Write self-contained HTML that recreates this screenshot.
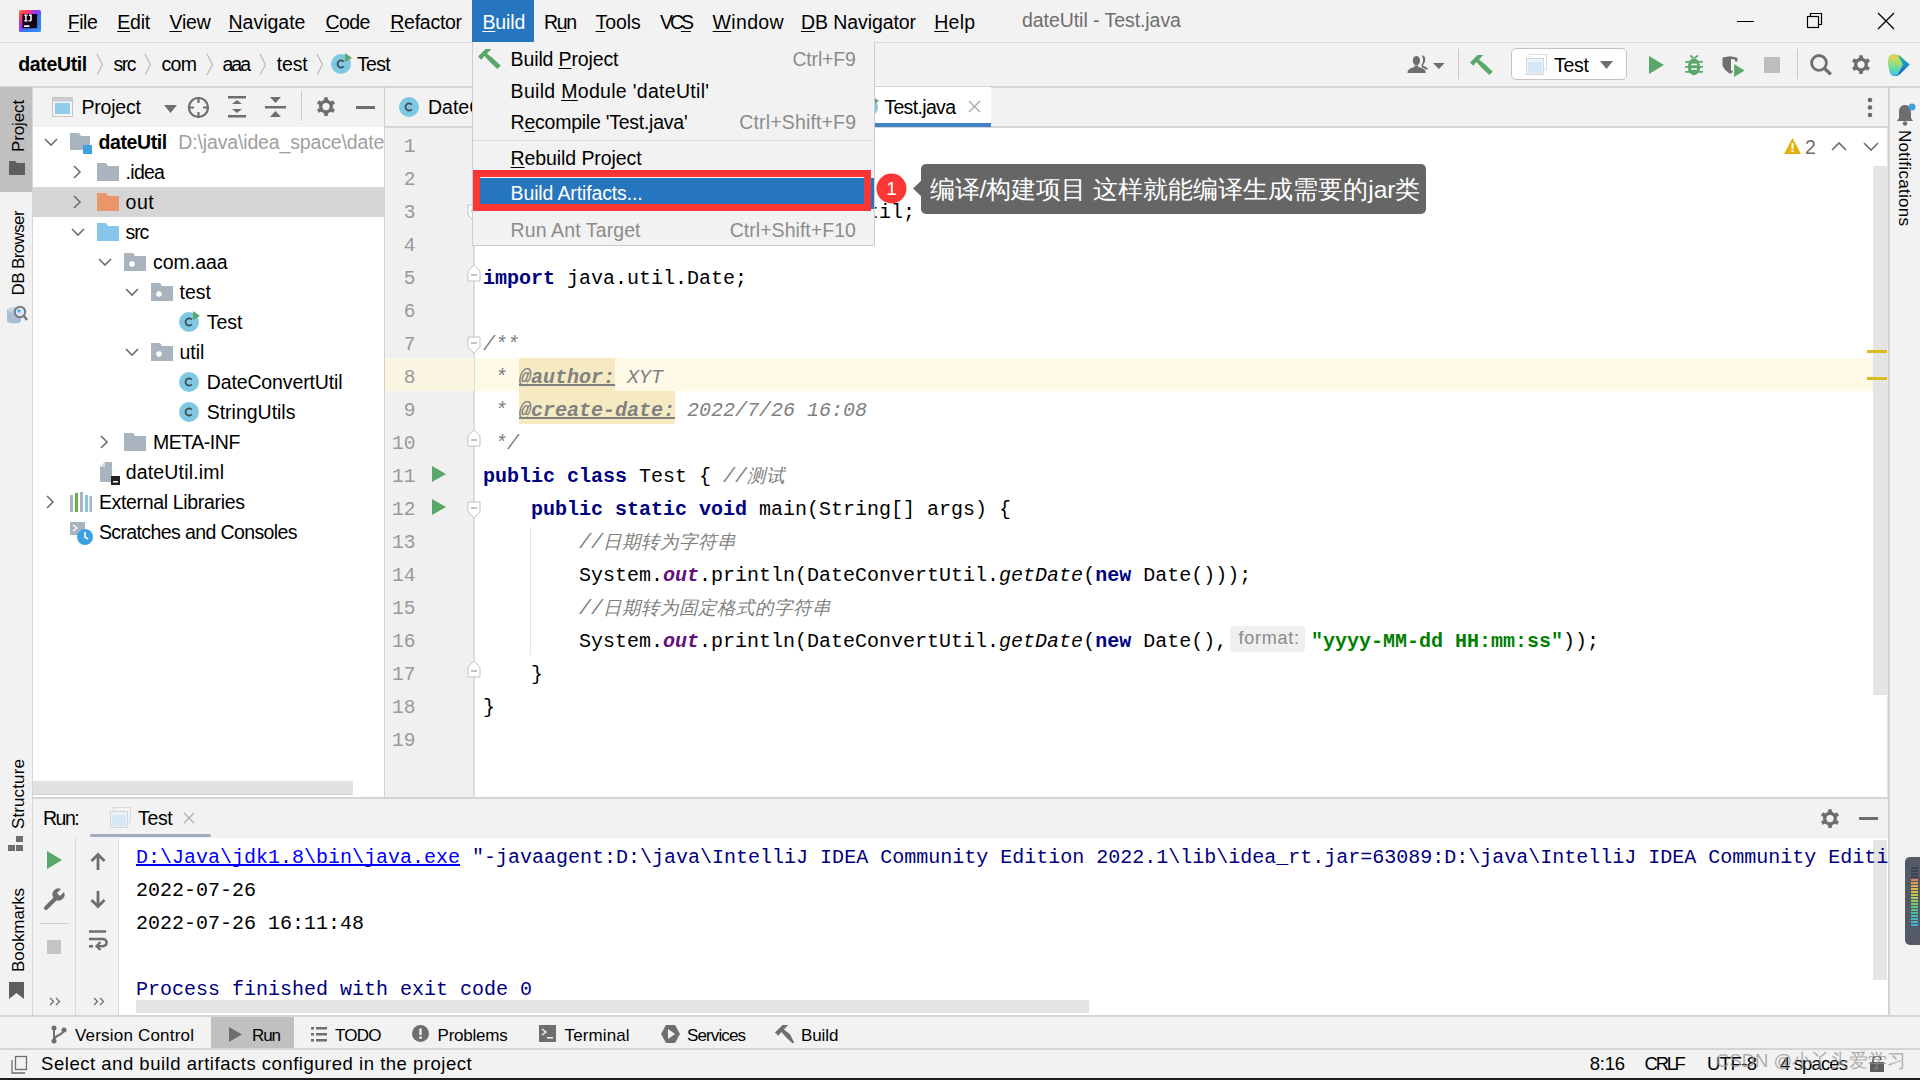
<!DOCTYPE html>
<html><head><meta charset="utf-8"><title>IntelliJ IDEA</title>
<style>
html,body{margin:0;padding:0;width:1920px;height:1080px;overflow:hidden;background:#f2f2f2}
body{position:relative;font-family:"Liberation Sans", sans-serif;}
body div, body span, body svg{position:absolute;}
body div span, body span span, body span b, body span i, body span u{position:static;}
body div > span{position:absolute;}
u{text-decoration:underline;text-underline-offset:2px}
*{text-decoration-skip-ink:none}
b[style*=underline], span[style*=underline]{text-decoration-thickness:1px}
</style></head><body>
<div style="left:0px;top:0px;width:1920px;height:1080px;background:#f2f2f2;"></div>
<div style="left:0px;top:42px;width:1920px;height:1px;background:#d9d9d9;"></div>
<svg style="left:19px;top:10px;" width="22" height="22" viewBox="0 0 22 22"><defs><linearGradient id="lg" x1="0" y1="0" x2="1" y2="1"><stop offset="0" stop-color="#ff6a2a"/><stop offset="0.25" stop-color="#fe2f7a"/><stop offset="0.45" stop-color="#8a3cff"/><stop offset="0.6" stop-color="#2f7bf0"/><stop offset="1" stop-color="#3a8ef5"/></linearGradient></defs><rect width="22" height="22" rx="1.5" fill="url(#lg)"/><rect x="3.4" y="4" width="14.7" height="14.2" fill="#120312"/><path d="M5.2 4.6H8.6V5.8H7.6V10.2H8.6V11.4H5.2V10.2H6.2V5.8H5.2Z" fill="#fff"/><path d="M10 4.6H12.8V9.8C12.8 11 12 11.6 10.8 11.6H9.6V10.3H10.6C11 10.3 11.3 10 11.3 9.6V5.9H10Z" fill="#fff"/><rect x="5" y="15.3" width="5.5" height="1.7" fill="#fff"/></svg>
<div style="left:472px;top:0px;width:62px;height:42px;background:#2675bf;"></div>
<span style="left:67.70px;top:9.24px;line-height:26px;font-size:19.5px;color:#000;white-space:nowrap;letter-spacing:-0.465px;"><u>F</u>ile</span>
<span style="left:117.30px;top:9.24px;line-height:26px;font-size:19.5px;color:#000;white-space:nowrap;letter-spacing:-0.245px;"><u>E</u>dit</span>
<span style="left:169.40px;top:9.24px;line-height:26px;font-size:19.5px;color:#000;white-space:nowrap;letter-spacing:-0.173px;"><u>V</u>iew</span>
<span style="left:228.50px;top:9.24px;line-height:26px;font-size:19.5px;color:#000;white-space:nowrap;letter-spacing:-0.004px;"><u>N</u>avigate</span>
<span style="left:325.40px;top:9.24px;line-height:26px;font-size:19.5px;color:#000;white-space:nowrap;letter-spacing:-0.535px;"><u>C</u>ode</span>
<span style="left:390.30px;top:9.24px;line-height:26px;font-size:19.5px;color:#000;white-space:nowrap;letter-spacing:-0.273px;"><u>R</u>efactor</span>
<span style="left:482.40px;top:9.24px;line-height:26px;font-size:19.5px;color:#fff;white-space:nowrap;letter-spacing:-0.072px;"><u>B</u>uild</span>
<span style="left:543.90px;top:9.24px;line-height:26px;font-size:19.5px;color:#000;white-space:nowrap;letter-spacing:-1.343px;">R<u>u</u>n</span>
<span style="left:595.60px;top:9.24px;line-height:26px;font-size:19.5px;color:#000;white-space:nowrap;letter-spacing:-0.109px;"><u>T</u>ools</span>
<span style="left:660.00px;top:9.24px;line-height:26px;font-size:19.5px;color:#000;white-space:nowrap;letter-spacing:-3.085px;">VC<u>S</u></span>
<span style="left:712.60px;top:9.24px;line-height:26px;font-size:19.5px;color:#000;white-space:nowrap;letter-spacing:0.316px;"><u>W</u>indow</span>
<span style="left:801.00px;top:9.24px;line-height:26px;font-size:19.5px;color:#000;white-space:nowrap;letter-spacing:-0.093px;"><u>D</u>B Navigator</span>
<span style="left:934.20px;top:9.24px;line-height:26px;font-size:19.5px;color:#000;white-space:nowrap;letter-spacing:0.277px;"><u>H</u>elp</span>
<span style="left:1022.00px;top:6.54px;line-height:26px;font-size:19.5px;color:#6e6e6e;white-space:nowrap;letter-spacing:-0.058px;">dateUtil - Test.java</span>
<div style="left:1737px;top:21px;width:17px;height:1px;background:#000;"></div>
<svg style="left:1806px;top:12px;" width="18" height="18" viewBox="0 0 18 18"><rect x="1.5" y="4.5" width="11" height="11" fill="none" stroke="#000" stroke-width="1.2"/><path d="M4.5 4.5V1.5H15.5V12.5H12.5" fill="none" stroke="#000" stroke-width="1.2"/></svg>
<svg style="left:1877px;top:12px;" width="18" height="18" viewBox="0 0 18 18"><path d="M1 1L17 17M17 1L1 17" stroke="#000" stroke-width="1.3"/></svg>
<div style="left:0px;top:85.5px;width:1920px;height:2px;background:#d4d4d4;"></div>
<span style="left:18.30px;top:50.99px;line-height:26px;font-size:19.5px;color:#000;white-space:nowrap;letter-spacing:-0.366px;font-weight:bold;">dateUtil</span>
<span style="left:113.50px;top:50.99px;line-height:26px;font-size:19.5px;color:#000;white-space:nowrap;letter-spacing:-1.467px;">src</span>
<span style="left:161.50px;top:50.99px;line-height:26px;font-size:19.5px;color:#000;white-space:nowrap;letter-spacing:-0.677px;">com</span>
<span style="left:222.50px;top:50.99px;line-height:26px;font-size:19.5px;color:#000;white-space:nowrap;letter-spacing:-2.032px;">aaa</span>
<span style="left:276.70px;top:50.99px;line-height:26px;font-size:19.5px;color:#000;white-space:nowrap;letter-spacing:-0.132px;">test</span>
<span style="left:356.90px;top:50.99px;line-height:26px;font-size:19.5px;color:#000;white-space:nowrap;letter-spacing:-0.627px;">Test</span>
<svg style="left:95.5px;top:53px;" width="8" height="23" viewBox="0 0 8 23"><path d="M1 1L6.5 11.5L1 22" fill="none" stroke="#b5b5b5" stroke-width="1.1"/></svg>
<svg style="left:143.5px;top:53px;" width="8" height="23" viewBox="0 0 8 23"><path d="M1 1L6.5 11.5L1 22" fill="none" stroke="#b5b5b5" stroke-width="1.1"/></svg>
<svg style="left:206px;top:53px;" width="8" height="23" viewBox="0 0 8 23"><path d="M1 1L6.5 11.5L1 22" fill="none" stroke="#b5b5b5" stroke-width="1.1"/></svg>
<svg style="left:259px;top:53px;" width="8" height="23" viewBox="0 0 8 23"><path d="M1 1L6.5 11.5L1 22" fill="none" stroke="#b5b5b5" stroke-width="1.1"/></svg>
<svg style="left:315.5px;top:53px;" width="8" height="23" viewBox="0 0 8 23"><path d="M1 1L6.5 11.5L1 22" fill="none" stroke="#b5b5b5" stroke-width="1.1"/></svg>
<svg style="left:1406px;top:54px;" width="24" height="20" viewBox="0 0 24 20"><ellipse cx="10.4" cy="6.6" rx="3.6" ry="4.7" fill="#6e6e6e"/><path d="M15.2 1.6C18 1 19.5 3 19.3 5.5C19.1 8 18.2 9.5 17.4 10.3L17.2 12C19.5 12.7 21.8 13.8 22 15.5H19.5C18 14 16.5 13.5 15.5 13.2L15.6 10.6C16.6 9.5 17 8 17 5.5C17 3.5 16.3 2.3 15.2 1.6Z" fill="#6e6e6e"/><path d="M1.5 19C1.5 15.5 4 14.2 8.3 13.3L8.6 11.5H12.2L12.5 13.3C17 14.2 19.8 15.5 19.8 19Z" fill="#6e6e6e"/></svg>
<svg style="left:1433px;top:62px;" width="13" height="8" viewBox="0 0 13 8"><path d="M0 1H11.7L5.9 7Z" fill="#6e6e6e"/></svg>
<div style="left:1458px;top:49px;width:1px;height:30px;background:#c9c9c9;"></div>
<svg style="left:1470px;top:54px;" width="24" height="23" viewBox="0 0 24 23"><path d="M0 8.5L7.5 1H13.3L8.9 5.4L15 10.2L22.8 17.7L19.2 21L11.1 13.2L6.4 8L3.3 11.8Z" fill="#59a869"/></svg>
<div style="left:1511px;top:48px;width:114px;height:30px;background:#fff;border:1px solid #c4c4c4;border-radius:5px"></div>
<svg style="left:1526px;top:54px;" width="22" height="21" viewBox="0 0 22 21"><rect x="3.5" y="0.5" width="17" height="15" fill="none" stroke="#d5dbe2"/><rect x="0.5" y="4.5" width="17" height="16" fill="#eef2f6" stroke="#cfd6de"/><rect x="2" y="8" width="14" height="11" fill="#d3e7f7"/></svg>
<span style="left:1554.00px;top:52.04px;line-height:26px;font-size:19.5px;color:#000;white-space:nowrap;letter-spacing:-0.293px;">Test</span>
<svg style="left:1600px;top:61px;" width="14" height="9" viewBox="0 0 14 9"><path d="M0 0H13L6.5 8Z" fill="#6e6e6e"/></svg>
<svg style="left:1648px;top:56px;" width="17" height="19" viewBox="0 0 17 19"><path d="M1 0L16 9L1 18Z" fill="#59a869"/></svg>
<svg style="left:1684px;top:53px;" width="20" height="24" viewBox="0 0 20 24"><path d="M6.2 2.5L9.5 5.2M13.9 2.5L10.5 5.2" stroke="#59a869" stroke-width="1.9"/><ellipse cx="10" cy="13.8" rx="6.2" ry="8.4" fill="#59a869"/><rect x="1.1" y="8" width="17.9" height="1.7" fill="#59a869"/><rect x="1.1" y="13.1" width="17.9" height="1.7" fill="#59a869"/><rect x="1.1" y="18" width="17.9" height="1.7" fill="#59a869"/><rect x="7.1" y="10.7" width="5.9" height="1.6" fill="#f2f2f2"/><rect x="7.1" y="15.2" width="5.9" height="1.6" fill="#f2f2f2"/></svg>
<svg style="left:1721px;top:55px;" width="26" height="24" viewBox="0 0 26 24"><path d="M1.5 2.5L9 1.2L16.4 2.7V6.5H14V4.5L10 4V16L11.5 15V17.5L9 18.7C5 16 1.5 13 1.5 9Z" fill="#6e6e6e"/><path d="M13.1 9L23.5 15.4L13.1 22Z" fill="#59a869"/></svg>
<div style="left:1764px;top:57px;width:16px;height:16px;background:#bdbdbd;"></div>
<div style="left:1797px;top:49px;width:1px;height:30px;background:#c9c9c9;"></div>
<svg style="left:1810px;top:54px;" width="23" height="23" viewBox="0 0 23 23"><circle cx="9" cy="8.9" r="7.4" fill="none" stroke="#6e6e6e" stroke-width="2.8"/><path d="M14.3 14.2L20.8 20.4" stroke="#6e6e6e" stroke-width="3.3"/></svg>
<svg style="left:1851px;top:54px;" width="20" height="22" viewBox="0 0 20 22"><g transform="scale(1.0)"><g transform="translate(10 10.6)" fill="#6e6e6e"><circle r="7"/><rect x="-1.9" y="-9.3" width="3.8" height="4" rx="0.6"/><rect x="-1.9" y="-9.3" width="3.8" height="4" rx="0.6" transform="rotate(60)"/><rect x="-1.9" y="-9.3" width="3.8" height="4" rx="0.6" transform="rotate(120)"/><rect x="-1.9" y="-9.3" width="3.8" height="4" rx="0.6" transform="rotate(180)"/><rect x="-1.9" y="-9.3" width="3.8" height="4" rx="0.6" transform="rotate(240)"/><rect x="-1.9" y="-9.3" width="3.8" height="4" rx="0.6" transform="rotate(300)"/><circle r="3.6" fill="#f2f2f2"/></g></g></svg>
<svg style="left:1888px;top:54px;" width="23" height="23" viewBox="0 0 23 23"><defs><linearGradient id="tbl" x1="0" y1="0" x2="0" y2="1"><stop offset="0" stop-color="#f2d04a"/><stop offset="0.35" stop-color="#a8e06a"/><stop offset="0.7" stop-color="#62d8a8"/><stop offset="1" stop-color="#3cc0ee"/></linearGradient><linearGradient id="tbr" x1="0" y1="0" x2="0" y2="1"><stop offset="0" stop-color="#22c08a"/><stop offset="0.5" stop-color="#1c8fd0"/><stop offset="1" stop-color="#1f4fc8"/></linearGradient></defs><path d="M1 3C3 -0.5 8 0.3 12 2L21.8 10.6L12 20.2C8 23 4 22.5 2.6 19.5C0.3 14 0 8 1 3Z" fill="url(#tbr)"/><path d="M1 3C3 -0.5 8 0.3 10 1.5L15 10.6L10 20.5C7 22.5 4 22.5 2.6 19.5C0.3 14 0 8 1 3Z" fill="url(#tbl)"/></svg>
<div style="left:32px;top:87px;width:1px;height:929px;background:#d6d6d6;"></div>
<div style="left:0px;top:87px;width:32px;height:105px;background:#c0c0c0;"></div>
<div style="left:7.5px;top:99.7px;writing-mode:vertical-rl;transform:rotate(180deg);font-size:17px;line-height:22px;color:#000;white-space:nowrap;letter-spacing:-0.145px">Project</div>
<svg style="left:9px;top:161px;" width="17" height="14" viewBox="0 0 17 14"><path d="M0 0H6L8 2H16V14H0Z" fill="#5e5e5e"/></svg>
<div style="left:7.5px;top:211px;writing-mode:vertical-rl;transform:rotate(180deg);font-size:17px;line-height:22px;color:#000;white-space:nowrap;letter-spacing:-0.623px">DB Browser</div>
<svg style="left:6px;top:303px;" width="22" height="22" viewBox="0 0 22 22"><path d="M1 7C1 5.5 5 4.5 8.5 4.5C12 4.5 15 5.5 15 7V18C15 19.5 12 20.5 8.5 20.5C5 20.5 1 19.5 1 18Z" fill="#a9bdd6"/><ellipse cx="8.5" cy="7" rx="7" ry="2.3" fill="#c6d4e6"/><circle cx="14" cy="9" r="5.2" fill="#dbeaf8" stroke="#7a7a7a" stroke-width="2"/><circle cx="13" cy="8" r="1.8" fill="#5aa8e6"/><path d="M17.5 12.5L21 17" stroke="#7a7a7a" stroke-width="2.6"/></svg>
<div style="left:7.5px;top:759px;writing-mode:vertical-rl;transform:rotate(180deg);font-size:17px;line-height:22px;color:#000;white-space:nowrap;letter-spacing:0.123px">Structure</div>
<svg style="left:8px;top:836px;" width="17" height="17" viewBox="0 0 17 17"><rect x="8" y="0" width="7" height="6" fill="#6e6e6e"/><rect x="0" y="9" width="7" height="6" fill="#6e6e6e"/><rect x="8" y="9" width="7" height="6" fill="#6e6e6e"/></svg>
<div style="left:7.5px;top:887.7px;writing-mode:vertical-rl;transform:rotate(180deg);font-size:17px;line-height:22px;color:#000;white-space:nowrap;letter-spacing:-0.125px">Bookmarks</div>
<svg style="left:9px;top:982px;" width="16" height="18" viewBox="0 0 16 18"><path d="M0 0H15V17L7.5 11L0 17Z" fill="#5e5e5e"/></svg>
<div style="left:33px;top:127px;width:351px;height:670px;background:#ffffff;"></div>
<div style="left:384px;top:87px;width:1px;height:711px;background:#d1d1d1;"></div>
<svg style="left:52px;top:97px;" width="22" height="21" viewBox="0 0 22 21"><rect x="0.5" y="0.5" width="20" height="19" fill="#f4f4f4" stroke="#c6c6c6"/><rect x="1" y="1" width="19" height="3.5" fill="#c9cdd2"/><rect x="3" y="6" width="15" height="11" fill="#8fcdea"/></svg>
<span style="left:81.60px;top:93.94px;line-height:26px;font-size:19.5px;color:#000;white-space:nowrap;letter-spacing:-0.241px;">Project</span>
<svg style="left:164px;top:105px;" width="14" height="9" viewBox="0 0 14 9"><path d="M0 0H13L6.5 8Z" fill="#6e6e6e"/></svg>
<svg style="left:187px;top:96px;" width="23" height="23" viewBox="0 0 23 23"><circle cx="11.5" cy="11.5" r="9.5" fill="none" stroke="#6e6e6e" stroke-width="2.2"/><path d="M11.5 1V7M11.5 16V22M1 11.5H7M16 11.5H22" stroke="#6e6e6e" stroke-width="2.2"/></svg>
<svg style="left:227px;top:96px;" width="20" height="22" viewBox="0 0 20 22"><rect x="1" y="0" width="18" height="2.5" fill="#6e6e6e"/><rect x="1" y="19" width="18" height="2.5" fill="#6e6e6e"/><path d="M5 8L10 4L15 8Z M5 13L10 17L15 13Z" fill="#6e6e6e"/></svg>
<svg style="left:265px;top:97px;" width="21" height="21" viewBox="0 0 21 21"><rect x="0" y="9" width="21" height="2.5" fill="#6e6e6e"/><path d="M5 0H16L10.5 6Z M5 20H16L10.5 14Z" fill="#6e6e6e"/></svg>
<div style="left:301px;top:91px;width:1px;height:30px;background:#c9c9c9;"></div>
<svg style="left:316px;top:96px;" width="20" height="22" viewBox="0 0 20 22"><g transform="scale(1.0)"><g transform="translate(10 10.6)" fill="#6e6e6e"><circle r="7"/><rect x="-1.9" y="-9.3" width="3.8" height="4" rx="0.6"/><rect x="-1.9" y="-9.3" width="3.8" height="4" rx="0.6" transform="rotate(60)"/><rect x="-1.9" y="-9.3" width="3.8" height="4" rx="0.6" transform="rotate(120)"/><rect x="-1.9" y="-9.3" width="3.8" height="4" rx="0.6" transform="rotate(180)"/><rect x="-1.9" y="-9.3" width="3.8" height="4" rx="0.6" transform="rotate(240)"/><rect x="-1.9" y="-9.3" width="3.8" height="4" rx="0.6" transform="rotate(300)"/><circle r="3.6" fill="#f2f2f2"/></g></g></svg>
<div style="left:356px;top:106px;width:19px;height:3px;background:#6e6e6e;"></div>
<div style="left:33px;top:187px;width:351px;height:30px;background:#d5d5d5;"></div>
<svg style="left:331px;top:54px;overflow:visible" width="22" height="21" viewBox="0 0 22 21"><circle cx="10" cy="10" r="10" fill="#7fc8e2"/><path d="M12.8 7.6A3.6 3.6 0 1 0 12.8 12.4" fill="none" stroke="#404b55" stroke-width="1.7"/><path d="M14 -1L21 4L14 8Z" fill="#59a869"/></svg>
<svg style="left:44px;top:137px;" width="14" height="10" viewBox="0 0 14 10"><path d="M1 2L7 8L13 2" fill="none" stroke="#6e6e6e" stroke-width="1.6"/></svg>
<svg style="left:70px;top:133px;" width="24" height="21" viewBox="0 0 24 21"><path d="M0 0H9L11 3H20V14H13V17H0Z" fill="#aab4be"/><rect x="13" y="12" width="9" height="9" fill="#3ea0e0"/></svg>
<span style="left:98.60px;top:129.14px;line-height:26px;font-size:19.5px;color:#000;white-space:nowrap;letter-spacing:-0.409px;font-weight:bold;">dateUtil</span>
<span style="left:178.30px;top:129.14px;line-height:26px;font-size:19.5px;color:#a0a0a0;white-space:nowrap;letter-spacing:-0.147px;">D:\java\idea_space\date</span>
<svg style="left:72px;top:165px;" width="10" height="14" viewBox="0 0 10 14"><path d="M2 1L8 7L2 13" fill="none" stroke="#6e6e6e" stroke-width="1.6"/></svg>
<svg style="left:97px;top:163px;" width="22" height="18" viewBox="0 0 22 18"><path d="M0 0H9L11 3H22V18H0Z" fill="#aab4be"/></svg>
<span style="left:125.60px;top:159.14px;line-height:26px;font-size:19.5px;color:#000;white-space:nowrap;letter-spacing:-0.729px;">.idea</span>
<svg style="left:72px;top:195px;" width="10" height="14" viewBox="0 0 10 14"><path d="M2 1L8 7L2 13" fill="none" stroke="#6e6e6e" stroke-width="1.6"/></svg>
<svg style="left:97px;top:193px;" width="22" height="18" viewBox="0 0 22 18"><path d="M0 0H9L11 3H22V18H0Z" fill="#e9966b"/></svg>
<span style="left:125.60px;top:189.14px;line-height:26px;font-size:19.5px;color:#000;white-space:nowrap;letter-spacing:0.447px;">out</span>
<svg style="left:71px;top:227px;" width="14" height="10" viewBox="0 0 14 10"><path d="M1 2L7 8L13 2" fill="none" stroke="#6e6e6e" stroke-width="1.6"/></svg>
<svg style="left:97px;top:223px;" width="22" height="18" viewBox="0 0 22 18"><path d="M0 0H9L11 3H22V18H0Z" fill="#86c6ea"/></svg>
<span style="left:125.60px;top:219.14px;line-height:26px;font-size:19.5px;color:#000;white-space:nowrap;letter-spacing:-1.217px;">src</span>
<svg style="left:98px;top:257px;" width="14" height="10" viewBox="0 0 14 10"><path d="M1 2L7 8L13 2" fill="none" stroke="#6e6e6e" stroke-width="1.6"/></svg>
<svg style="left:124px;top:253px;" width="22" height="18" viewBox="0 0 22 18"><path d="M0 0H9L11 3H22V18H0Z" fill="#aab4be"/><circle cx="8" cy="11" r="2.8" fill="#fff"/></svg>
<span style="left:152.90px;top:249.14px;line-height:26px;font-size:19.5px;color:#000;white-space:nowrap;">com.aaa</span>
<svg style="left:125px;top:287px;" width="14" height="10" viewBox="0 0 14 10"><path d="M1 2L7 8L13 2" fill="none" stroke="#6e6e6e" stroke-width="1.6"/></svg>
<svg style="left:151px;top:283px;" width="22" height="18" viewBox="0 0 22 18"><path d="M0 0H9L11 3H22V18H0Z" fill="#aab4be"/><circle cx="8" cy="11" r="2.8" fill="#fff"/></svg>
<span style="left:179.50px;top:279.14px;line-height:26px;font-size:19.5px;color:#000;white-space:nowrap;">test</span>
<svg style="left:179px;top:312px;overflow:visible" width="22" height="21" viewBox="0 0 22 21"><circle cx="10" cy="10" r="10" fill="#7fc8e2"/><path d="M12.8 7.6A3.6 3.6 0 1 0 12.8 12.4" fill="none" stroke="#404b55" stroke-width="1.7"/><path d="M14 -1L21 4L14 8Z" fill="#59a869"/></svg>
<span style="left:206.70px;top:309.14px;line-height:26px;font-size:19.5px;color:#000;white-space:nowrap;">Test</span>
<svg style="left:125px;top:347px;" width="14" height="10" viewBox="0 0 14 10"><path d="M1 2L7 8L13 2" fill="none" stroke="#6e6e6e" stroke-width="1.6"/></svg>
<svg style="left:151px;top:343px;" width="22" height="18" viewBox="0 0 22 18"><path d="M0 0H9L11 3H22V18H0Z" fill="#aab4be"/><circle cx="8" cy="11" r="2.8" fill="#fff"/></svg>
<span style="left:179.50px;top:339.14px;line-height:26px;font-size:19.5px;color:#000;white-space:nowrap;">util</span>
<svg style="left:179px;top:372px;overflow:visible" width="22" height="21" viewBox="0 0 22 21"><circle cx="10" cy="10" r="10" fill="#7fc8e2"/><path d="M12.8 7.6A3.6 3.6 0 1 0 12.8 12.4" fill="none" stroke="#404b55" stroke-width="1.7"/></svg>
<span style="left:206.70px;top:369.14px;line-height:26px;font-size:19.5px;color:#000;white-space:nowrap;letter-spacing:-0.119px;">DateConvertUtil</span>
<svg style="left:179px;top:402px;overflow:visible" width="22" height="21" viewBox="0 0 22 21"><circle cx="10" cy="10" r="10" fill="#7fc8e2"/><path d="M12.8 7.6A3.6 3.6 0 1 0 12.8 12.4" fill="none" stroke="#404b55" stroke-width="1.7"/></svg>
<span style="left:206.70px;top:399.14px;line-height:26px;font-size:19.5px;color:#000;white-space:nowrap;letter-spacing:-0.012px;">StringUtils</span>
<svg style="left:99px;top:435px;" width="10" height="14" viewBox="0 0 10 14"><path d="M2 1L8 7L2 13" fill="none" stroke="#6e6e6e" stroke-width="1.6"/></svg>
<svg style="left:124px;top:433px;" width="22" height="18" viewBox="0 0 22 18"><path d="M0 0H9L11 3H22V18H0Z" fill="#aab4be"/></svg>
<span style="left:152.90px;top:429.14px;line-height:26px;font-size:19.5px;color:#000;white-space:nowrap;letter-spacing:-0.454px;">META-INF</span>
<svg style="left:100px;top:462px;" width="20" height="24" viewBox="0 0 20 24"><path d="M5 0H12V20H0V5Z" fill="#aab4be"/><path d="M0 5H5V0Z" fill="#d8dde2"/><rect x="11" y="14" width="9" height="9" fill="#222"/><rect x="13" y="19" width="5" height="1.5" fill="#fff"/></svg>
<span style="left:125.70px;top:459.14px;line-height:26px;font-size:19.5px;color:#000;white-space:nowrap;letter-spacing:0.180px;">dateUtil.iml</span>
<svg style="left:45px;top:495px;" width="10" height="14" viewBox="0 0 10 14"><path d="M2 1L8 7L2 13" fill="none" stroke="#6e6e6e" stroke-width="1.6"/></svg>
<svg style="left:70px;top:492px;" width="22" height="20" viewBox="0 0 22 20"><rect x="0" y="3" width="3" height="17" fill="#aab4be"/><rect x="5" y="1" width="3" height="19" fill="#62b543"/><rect x="10" y="0" width="3" height="20" fill="#aab4be"/><rect x="15" y="3" width="3" height="17" fill="#86c6ea"/><rect x="19.5" y="4" width="2.5" height="16" fill="#aab4be"/></svg>
<span style="left:98.90px;top:489.14px;line-height:26px;font-size:19.5px;color:#000;white-space:nowrap;letter-spacing:-0.336px;">External Libraries</span>
<svg style="left:70px;top:522px;" width="24" height="23" viewBox="0 0 24 23"><rect x="0" y="0" width="15" height="13" fill="#aab4be"/><path d="M3 3L7 6L3 9" fill="none" stroke="#fff" stroke-width="1.3"/><circle cx="15" cy="15" r="8" fill="#3ea0e0"/><path d="M15 10V15L18 17" fill="none" stroke="#fff" stroke-width="1.6"/></svg>
<span style="left:98.90px;top:519.14px;line-height:26px;font-size:19.5px;color:#000;white-space:nowrap;letter-spacing:-0.609px;">Scratches and Consoles</span>
<div style="left:33px;top:781px;width:320px;height:14px;background:#e1e1e1;border-bottom:1px solid #cfcfcf;box-sizing:border-box"></div>
<div style="left:385px;top:126px;width:1503px;height:2px;background:#d4d4d4;"></div>
<svg style="left:399px;top:97px;overflow:visible" width="22" height="21" viewBox="0 0 22 21"><circle cx="10" cy="10" r="10" fill="#7fc8e2"/><path d="M12.8 7.6A3.6 3.6 0 1 0 12.8 12.4" fill="none" stroke="#404b55" stroke-width="1.7"/></svg>
<span style="left:428.00px;top:94.14px;line-height:26px;font-size:19.5px;color:#000;white-space:nowrap;">DateConvertUtil.java</span>
<div style="left:856px;top:87px;width:135px;height:40px;background:#ffffff;"></div>
<div style="left:856px;top:123px;width:135px;height:4px;background:#4083c9;"></div>
<svg style="left:858px;top:97px;overflow:visible" width="22" height="21" viewBox="0 0 22 21"><circle cx="10" cy="10" r="10" fill="#7fc8e2"/><path d="M12.8 7.6A3.6 3.6 0 1 0 12.8 12.4" fill="none" stroke="#404b55" stroke-width="1.7"/><path d="M14 -1L21 4L14 8Z" fill="#59a869"/></svg>
<span style="left:884.30px;top:94.14px;line-height:26px;font-size:19.5px;color:#000;white-space:nowrap;letter-spacing:-0.653px;">Test.java</span>
<svg style="left:968px;top:100px;" width="13" height="13" viewBox="0 0 13 13"><path d="M1 1L12 12M12 1L1 12" stroke="#a8a8a8" stroke-width="1.4"/></svg>
<svg style="left:1866px;top:97px;" width="8" height="22" viewBox="0 0 8 22"><circle cx="4" cy="3" r="2.3" fill="#6e6e6e"/><circle cx="4" cy="10.5" r="2.3" fill="#6e6e6e"/><circle cx="4" cy="18" r="2.3" fill="#6e6e6e"/></svg>
<div style="left:1888px;top:87px;width:2px;height:929px;background:#d2d2d2;"></div>
<div style="left:385px;top:128px;width:89px;height:669px;background:#f0f0f0;"></div>
<div style="left:474px;top:128px;width:1414px;height:669px;background:#ffffff;"></div>
<div style="left:473px;top:128px;width:2px;height:669px;background:#dcdcdc;"></div>
<div style="left:385px;top:358px;width:89px;height:33px;background:#fbf6e1;"></div>
<div style="left:475px;top:358px;width:1398px;height:33px;background:#fefae7;"></div>
<span style="left:375.5px;width:40px;text-align:right;top:130.5px;line-height:33px;font-family:'Liberation Mono', monospace;font-size:19.5px;color:#999">1</span>
<span style="left:375.5px;width:40px;text-align:right;top:163.5px;line-height:33px;font-family:'Liberation Mono', monospace;font-size:19.5px;color:#999">2</span>
<span style="left:375.5px;width:40px;text-align:right;top:196.5px;line-height:33px;font-family:'Liberation Mono', monospace;font-size:19.5px;color:#999">3</span>
<span style="left:375.5px;width:40px;text-align:right;top:229.5px;line-height:33px;font-family:'Liberation Mono', monospace;font-size:19.5px;color:#999">4</span>
<span style="left:375.5px;width:40px;text-align:right;top:262.5px;line-height:33px;font-family:'Liberation Mono', monospace;font-size:19.5px;color:#999">5</span>
<span style="left:375.5px;width:40px;text-align:right;top:295.5px;line-height:33px;font-family:'Liberation Mono', monospace;font-size:19.5px;color:#999">6</span>
<span style="left:375.5px;width:40px;text-align:right;top:328.5px;line-height:33px;font-family:'Liberation Mono', monospace;font-size:19.5px;color:#999">7</span>
<span style="left:375.5px;width:40px;text-align:right;top:361.5px;line-height:33px;font-family:'Liberation Mono', monospace;font-size:19.5px;color:#999">8</span>
<span style="left:375.5px;width:40px;text-align:right;top:394.5px;line-height:33px;font-family:'Liberation Mono', monospace;font-size:19.5px;color:#999">9</span>
<span style="left:375.5px;width:40px;text-align:right;top:427.5px;line-height:33px;font-family:'Liberation Mono', monospace;font-size:19.5px;color:#999">10</span>
<span style="left:375.5px;width:40px;text-align:right;top:460.5px;line-height:33px;font-family:'Liberation Mono', monospace;font-size:19.5px;color:#999">11</span>
<span style="left:375.5px;width:40px;text-align:right;top:493.5px;line-height:33px;font-family:'Liberation Mono', monospace;font-size:19.5px;color:#999">12</span>
<span style="left:375.5px;width:40px;text-align:right;top:526.5px;line-height:33px;font-family:'Liberation Mono', monospace;font-size:19.5px;color:#999">13</span>
<span style="left:375.5px;width:40px;text-align:right;top:559.5px;line-height:33px;font-family:'Liberation Mono', monospace;font-size:19.5px;color:#999">14</span>
<span style="left:375.5px;width:40px;text-align:right;top:592.5px;line-height:33px;font-family:'Liberation Mono', monospace;font-size:19.5px;color:#999">15</span>
<span style="left:375.5px;width:40px;text-align:right;top:625.5px;line-height:33px;font-family:'Liberation Mono', monospace;font-size:19.5px;color:#999">16</span>
<span style="left:375.5px;width:40px;text-align:right;top:658.5px;line-height:33px;font-family:'Liberation Mono', monospace;font-size:19.5px;color:#999">17</span>
<span style="left:375.5px;width:40px;text-align:right;top:691.5px;line-height:33px;font-family:'Liberation Mono', monospace;font-size:19.5px;color:#999">18</span>
<span style="left:375.5px;width:40px;text-align:right;top:724.5px;line-height:33px;font-family:'Liberation Mono', monospace;font-size:19.5px;color:#999">19</span>
<svg style="left:432px;top:466px;" width="14" height="16" viewBox="0 0 14 16"><path d="M0 0L14 8L0 16Z" fill="#59a869"/></svg>
<svg style="left:432px;top:499px;" width="14" height="16" viewBox="0 0 14 16"><path d="M0 0L14 8L0 16Z" fill="#59a869"/></svg>
<svg style="left:467px;top:203.5px;" width="15" height="18" viewBox="0 0 15 18"><path d="M1 1H13V11L7 17L1 11Z" fill="#fff" stroke="#c2c2c2"/><path d="M4 7H10" stroke="#9a9a9a" stroke-width="1.2"/></svg>
<svg style="left:467px;top:263.5px;" width="15" height="18" viewBox="0 0 15 18"><path d="M1 17H13V7L7 1L1 7Z" fill="#fff" stroke="#c2c2c2"/><path d="M4 11H10" stroke="#9a9a9a" stroke-width="1.2"/></svg>
<svg style="left:467px;top:335.5px;" width="15" height="18" viewBox="0 0 15 18"><path d="M1 1H13V11L7 17L1 11Z" fill="#fff" stroke="#c2c2c2"/><path d="M4 7H10" stroke="#9a9a9a" stroke-width="1.2"/></svg>
<svg style="left:467px;top:428.5px;" width="15" height="18" viewBox="0 0 15 18"><path d="M1 17H13V7L7 1L1 7Z" fill="#fff" stroke="#c2c2c2"/><path d="M4 11H10" stroke="#9a9a9a" stroke-width="1.2"/></svg>
<svg style="left:467px;top:500.5px;" width="15" height="18" viewBox="0 0 15 18"><path d="M1 1H13V11L7 17L1 11Z" fill="#fff" stroke="#c2c2c2"/><path d="M4 7H10" stroke="#9a9a9a" stroke-width="1.2"/></svg>
<svg style="left:467px;top:659.5px;" width="15" height="18" viewBox="0 0 15 18"><path d="M1 17H13V7L7 1L1 7Z" fill="#fff" stroke="#c2c2c2"/><path d="M4 11H10" stroke="#9a9a9a" stroke-width="1.2"/></svg>
<div style="left:530px;top:527px;width:1px;height:128px;background:#e6e6e6;"></div>
<div style="left:519px;top:358px;width:96px;height:33px;background:#f6eac2;"></div>
<div style="left:519px;top:391px;width:156px;height:33px;background:#f6eac2;"></div>
<span style="left:483px;top:130px;line-height:33px;font-family:'Liberation Mono', monospace;font-size:20px;color:#000;white-space:pre">package com.aaa.test;</span>
<span style="left:483px;top:196px;line-height:33px;font-family:'Liberation Mono', monospace;font-size:20px;color:#000;white-space:pre">import com.aaa.util.DateConvertUtil;</span>
<span style="left:483px;top:262px;line-height:33px;font-family:'Liberation Mono', monospace;font-size:20px;color:#000;white-space:pre"><span style="color:#000080;font-weight:bold">import</span> java.util.Date;</span>
<span style="left:483px;top:328px;line-height:33px;font-family:'Liberation Mono', monospace;font-size:20px;color:#000;white-space:pre"><span style="color:#808080;font-style:italic">/**</span></span>
<span style="left:483px;top:361px;line-height:33px;font-family:'Liberation Mono', monospace;font-size:20px;color:#000;white-space:pre"><span style="color:#808080;font-style:italic"> * <b style="text-decoration:underline">@author:</b> XYT</span></span>
<span style="left:483px;top:394px;line-height:33px;font-family:'Liberation Mono', monospace;font-size:20px;color:#000;white-space:pre"><span style="color:#808080;font-style:italic"> * <b style="text-decoration:underline">@create-date:</b> 2022/7/26 16:08</span></span>
<span style="left:483px;top:427px;line-height:33px;font-family:'Liberation Mono', monospace;font-size:20px;color:#000;white-space:pre"><span style="color:#808080;font-style:italic"> */</span></span>
<span style="left:483px;top:460px;line-height:33px;font-family:'Liberation Mono', monospace;font-size:20px;color:#000;white-space:pre"><span style="color:#000080;font-weight:bold">public class</span> Test { <span style="color:#808080;font-style:italic">//<span style="font-size:18.5px">测试</span></span></span>
<span style="left:483px;top:493px;line-height:33px;font-family:'Liberation Mono', monospace;font-size:20px;color:#000;white-space:pre">    <span style="color:#000080;font-weight:bold">public static void</span> main(String[] args) {</span>
<span style="left:483px;top:526px;line-height:33px;font-family:'Liberation Mono', monospace;font-size:20px;color:#000;white-space:pre">        <span style="color:#808080;font-style:italic">//<span style="font-size:18.5px">日期转为字符串</span></span></span>
<span style="left:483px;top:559px;line-height:33px;font-family:'Liberation Mono', monospace;font-size:20px;color:#000;white-space:pre">        System.<span style="color:#660e7a;font-weight:bold;font-style:italic">out</span>.println(DateConvertUtil.<i>getDate</i>(<span style="color:#000080;font-weight:bold">new</span> Date()));</span>
<span style="left:483px;top:592px;line-height:33px;font-family:'Liberation Mono', monospace;font-size:20px;color:#000;white-space:pre">        <span style="color:#808080;font-style:italic">//<span style="font-size:18.5px">日期转为固定格式的字符串</span></span></span>
<span style="left:483px;top:625px;line-height:33px;font-family:'Liberation Mono', monospace;font-size:20px;color:#000;white-space:pre">        System.<span style="color:#660e7a;font-weight:bold;font-style:italic">out</span>.println(DateConvertUtil.<i>getDate</i>(<span style="color:#000080;font-weight:bold">new</span> Date(),</span>
<span style="left:483px;top:658px;line-height:33px;font-family:'Liberation Mono', monospace;font-size:20px;color:#000;white-space:pre">    }</span>
<span style="left:483px;top:691px;line-height:33px;font-family:'Liberation Mono', monospace;font-size:20px;color:#000;white-space:pre">}</span>
<div style="left:1230px;top:626px;width:75px;height:26px;background:#efefef;border-radius:4px"></div>
<span style="left:1238.40px;top:625.36px;line-height:26px;font-size:18px;color:#8a8a8a;white-space:nowrap;letter-spacing:0.787px;">format:</span>
<span style="left:1311px;top:625px;line-height:33px;font-family:'Liberation Mono', monospace;font-size:20px;color:#000;white-space:pre"><span style="color:#008000;font-weight:bold">"yyyy-MM-dd HH:mm:ss"</span>));</span>
<svg style="left:1784px;top:138px;" width="17" height="16" viewBox="0 0 17 16"><path d="M8.5 0L17 16H0Z" fill="#e2b007"/><rect x="7.5" y="5" width="2" height="6" fill="#fff"/><rect x="7.5" y="12" width="2" height="2" fill="#fff"/></svg>
<span style="left:1805px;top:134.0px;line-height:26px;font-size:19.5px;color:#6e6e6e;">2</span>
<svg style="left:1831px;top:141px;" width="16" height="10" viewBox="0 0 16 10"><path d="M1 9L8 2L15 9" fill="none" stroke="#6e6e6e" stroke-width="1.6"/></svg>
<svg style="left:1863px;top:142px;" width="16" height="10" viewBox="0 0 16 10"><path d="M1 1L8 8L15 1" fill="none" stroke="#6e6e6e" stroke-width="1.6"/></svg>
<div style="left:1873px;top:166px;width:14px;height:529px;background:#e4e4e4;"></div>
<div style="left:1887px;top:128px;width:1px;height:669px;background:#e6e6e6;"></div>
<div style="left:1867px;top:350px;width:20px;height:3px;background:#dcbc1c;"></div>
<div style="left:1867px;top:377px;width:20px;height:3px;background:#dcbc1c;"></div>
<svg style="left:1896px;top:103px;" width="22" height="24" viewBox="0 0 22 24"><path d="M9 2C4 2 3 6 3 10V15L1 18H17L15 15V10C15 6 14 2 9 2Z" fill="#6e6e6e"/><circle cx="9" cy="20.5" r="2.2" fill="#6e6e6e"/><circle cx="16" cy="4" r="3.5" fill="#3ea0e0"/></svg>
<div style="left:1893px;top:130.4px;writing-mode:vertical-rl;font-size:17px;line-height:22px;color:#000;white-space:nowrap;letter-spacing:0.279px">Notifications</div>
<div style="left:33px;top:797px;width:1855px;height:2px;background:#d4d4d4;"></div>
<span style="left:43.00px;top:805.24px;line-height:26px;font-size:19.5px;color:#000;white-space:nowrap;letter-spacing:-1.515px;">Run:</span>
<svg style="left:110px;top:807px;" width="22" height="21" viewBox="0 0 22 21"><rect x="3.5" y="0.5" width="17" height="15" fill="none" stroke="#d5dbe2"/><rect x="0.5" y="4.5" width="17" height="16" fill="#eef2f6" stroke="#cfd6de"/><rect x="2" y="8" width="14" height="11" fill="#d3e7f7"/></svg>
<span style="left:138.00px;top:805.24px;line-height:26px;font-size:19.5px;color:#000;white-space:nowrap;letter-spacing:-0.327px;">Test</span>
<svg style="left:183px;top:812px;" width="12" height="12" viewBox="0 0 12 12"><path d="M1 1L11 11M11 1L1 11" stroke="#b0b0b0" stroke-width="1.3"/></svg>
<div style="left:90px;top:834px;width:121px;height:3px;background:#a3abbd;border-radius:2px"></div>
<svg style="left:1820px;top:808px;" width="20" height="22" viewBox="0 0 20 22"><g transform="scale(1.0)"><g transform="translate(10 10.6)" fill="#6e6e6e"><circle r="7"/><rect x="-1.9" y="-9.3" width="3.8" height="4" rx="0.6"/><rect x="-1.9" y="-9.3" width="3.8" height="4" rx="0.6" transform="rotate(60)"/><rect x="-1.9" y="-9.3" width="3.8" height="4" rx="0.6" transform="rotate(120)"/><rect x="-1.9" y="-9.3" width="3.8" height="4" rx="0.6" transform="rotate(180)"/><rect x="-1.9" y="-9.3" width="3.8" height="4" rx="0.6" transform="rotate(240)"/><rect x="-1.9" y="-9.3" width="3.8" height="4" rx="0.6" transform="rotate(300)"/><circle r="3.6" fill="#f2f2f2"/></g></g></svg>
<div style="left:1859px;top:817px;width:19px;height:3px;background:#6e6e6e;"></div>
<div style="left:119px;top:838px;width:1769px;height:177px;background:#ffffff;"></div>
<div style="left:75px;top:838px;width:1px;height:178px;background:#dadada;"></div>
<div style="left:118px;top:838px;width:1px;height:178px;background:#dadada;"></div>
<svg style="left:47px;top:851px;" width="15" height="18" viewBox="0 0 15 18"><path d="M0 0L15 9L0 18Z" fill="#59a869"/></svg>
<svg style="left:44px;top:888px;" width="21" height="22" viewBox="0 0 21 22"><path d="M2 20L11 11" stroke="#6e6e6e" stroke-width="4" stroke-linecap="round"/><path d="M9 9A6 6 0 0 1 17 1L13 5L16 8L20 4A6 6 0 0 1 12 12Z" fill="#6e6e6e"/></svg>
<div style="left:40px;top:923px;width:29px;height:1px;background:#cfcfcf;"></div>
<div style="left:47px;top:940px;width:14px;height:14px;background:#c4c4c4;"></div>
<svg style="left:49px;top:997px;" width="12" height="9" viewBox="0 0 12 9"><path d="M1 1L4.5 4.5L1 8M7 1L10.5 4.5L7 8" fill="none" stroke="#6e6e6e" stroke-width="1.3"/></svg>
<svg style="left:89px;top:852px;" width="18" height="20" viewBox="0 0 18 20"><path d="M9 3V18M2.5 9L9 2.5L15.5 9" fill="none" stroke="#6e6e6e" stroke-width="2.8"/></svg>
<svg style="left:89px;top:890px;" width="18" height="20" viewBox="0 0 18 20"><path d="M9 1V16M2.5 10L9 16.5L15.5 10" fill="none" stroke="#6e6e6e" stroke-width="2.8"/></svg>
<svg style="left:88px;top:929px;" width="21" height="22" viewBox="0 0 21 22"><path d="M1 2.5H18M1 10H15A3.6 3.6 0 0 1 15 17.2H10" fill="none" stroke="#6e6e6e" stroke-width="2.6"/><path d="M12.5 13L8.5 17.2L12.5 21" fill="none" stroke="#6e6e6e" stroke-width="2.4"/><rect x="1" y="16" width="4" height="2.6" fill="#6e6e6e"/></svg>
<svg style="left:93px;top:997px;" width="12" height="9" viewBox="0 0 12 9"><path d="M1 1L4.5 4.5L1 8M7 1L10.5 4.5L7 8" fill="none" stroke="#6e6e6e" stroke-width="1.3"/></svg>
<div style="left:1873px;top:840px;width:14px;height:140px;background:#e4e4e4;"></div>
<div style="left:119px;top:838px;width:1769px;height:178px;overflow:hidden">
<span style="left:17px;top:3px;line-height:33px;font-family:'Liberation Mono', monospace;font-size:20px;white-space:pre;color:#000080"><span style="color:#0000ff;text-decoration:underline">D:\Java\jdk1.8\bin\java.exe</span> "-javaagent:D:\java\IntelliJ IDEA Community Edition 2022.1\lib\idea_rt.jar=63089:D:\java\IntelliJ IDEA Community Edition 2022.1\bin"</span>
<span style="left:17px;top:36px;line-height:33px;font-family:'Liberation Mono', monospace;font-size:20px;white-space:pre;color:#000">2022-07-26</span>
<span style="left:17px;top:69px;line-height:33px;font-family:'Liberation Mono', monospace;font-size:20px;white-space:pre;color:#000">2022-07-26 16:11:48</span>
<span style="left:17px;top:135px;line-height:33px;font-family:'Liberation Mono', monospace;font-size:20px;white-space:pre;color:#000080">Process finished with exit code 0</span>
</div>
<div style="left:136px;top:1000px;width:953px;height:13px;background:#e4e4e4;"></div>
<div style="left:0px;top:1015px;width:1920px;height:2px;background:#d4d4d4;"></div>
<div style="left:1905px;top:857px;width:24px;height:88px;background:#535a65;border-radius:5px"></div>
<div style="left:1911px;top:867.0px;width:7px;height:1.6px;background:#3f454e;"></div>
<div style="left:1911px;top:870.0px;width:7px;height:1.6px;background:#3f454e;"></div>
<div style="left:1911px;top:873.0px;width:7px;height:1.6px;background:#3f454e;"></div>
<div style="left:1911px;top:876.0px;width:7px;height:1.6px;background:#3f454e;"></div>
<div style="left:1911px;top:879.0px;width:7px;height:1.6px;background:#e0875a;"></div>
<div style="left:1911px;top:882.0px;width:7px;height:1.6px;background:#e39a52;"></div>
<div style="left:1911px;top:885.0px;width:7px;height:1.6px;background:#e3ad48;"></div>
<div style="left:1911px;top:888.0px;width:7px;height:1.6px;background:#d9bd45;"></div>
<div style="left:1911px;top:891.0px;width:7px;height:1.6px;background:#cfc648;"></div>
<div style="left:1911px;top:894.0px;width:7px;height:1.6px;background:#b9cd50;"></div>
<div style="left:1911px;top:897.0px;width:7px;height:1.6px;background:#a4d05a;"></div>
<div style="left:1911px;top:900.0px;width:7px;height:1.6px;background:#8ccf62;"></div>
<div style="left:1911px;top:903.0px;width:7px;height:1.6px;background:#74cc6c;"></div>
<div style="left:1911px;top:906.0px;width:7px;height:1.6px;background:#5fc87a;"></div>
<div style="left:1911px;top:909.0px;width:7px;height:1.6px;background:#52c48c;"></div>
<div style="left:1911px;top:912.0px;width:7px;height:1.6px;background:#4bbf9e;"></div>
<div style="left:1911px;top:915.0px;width:7px;height:1.6px;background:#47bcb0;"></div>
<div style="left:1911px;top:918.0px;width:7px;height:1.6px;background:#45b9c2;"></div>
<div style="left:1911px;top:921.0px;width:7px;height:1.6px;background:#43b5d2;"></div>
<div style="left:1911px;top:924.0px;width:7px;height:1.6px;background:#40b0e0;"></div>
<div style="left:0px;top:1048px;width:1920px;height:2px;background:#d4d4d4;"></div>
<div style="left:211px;top:1017px;width:83px;height:31px;background:#c0c0c0;"></div>
<svg style="left:51px;top:1025px;" width="16" height="19" viewBox="0 0 16 19"><circle cx="3" cy="3" r="2.5" fill="#6e6e6e"/><circle cx="3" cy="16" r="2.5" fill="#6e6e6e"/><circle cx="13" cy="5" r="2.5" fill="#6e6e6e"/><path d="M3 3V16M13 5C13 10 3 10 3 15" fill="none" stroke="#6e6e6e" stroke-width="2"/></svg>
<span style="left:75.00px;top:1022.91px;line-height:26px;font-size:17px;color:#000;white-space:nowrap;letter-spacing:0.194px;">Version Control</span>
<svg style="left:229px;top:1027px;" width="13" height="15" viewBox="0 0 13 15"><path d="M0 0L13 7.5L0 15Z" fill="#6e6e6e"/></svg>
<span style="left:252.00px;top:1022.91px;line-height:26px;font-size:17px;color:#000;white-space:nowrap;letter-spacing:-1.055px;">Run</span>
<svg style="left:311px;top:1026px;" width="16" height="16" viewBox="0 0 16 16"><rect x="0" y="1" width="3" height="2.5" fill="#6e6e6e"/><rect x="5" y="1" width="11" height="2.5" fill="#6e6e6e"/><rect x="0" y="7" width="3" height="2.5" fill="#6e6e6e"/><rect x="5" y="7" width="11" height="2.5" fill="#6e6e6e"/><rect x="0" y="13" width="3" height="2.5" fill="#6e6e6e"/><rect x="5" y="13" width="11" height="2.5" fill="#6e6e6e"/></svg>
<span style="left:335.00px;top:1022.91px;line-height:26px;font-size:17px;color:#000;white-space:nowrap;letter-spacing:-0.763px;">TODO</span>
<svg style="left:412px;top:1025px;" width="17" height="17" viewBox="0 0 17 17"><circle cx="8.5" cy="8.5" r="8.5" fill="#6e6e6e"/><rect x="7.3" y="3.5" width="2.4" height="6.5" fill="#f2f2f2"/><rect x="7.3" y="11.5" width="2.4" height="2.4" fill="#f2f2f2"/></svg>
<span style="left:437.60px;top:1022.91px;line-height:26px;font-size:17px;color:#000;white-space:nowrap;letter-spacing:-0.249px;">Problems</span>
<svg style="left:539px;top:1025px;" width="17" height="17" viewBox="0 0 17 17"><rect x="0" y="0" width="17" height="17" fill="#6e6e6e"/><path d="M3 4L7 7L3 10" fill="none" stroke="#f2f2f2" stroke-width="1.5"/><rect x="8" y="12" width="6" height="1.6" fill="#f2f2f2"/></svg>
<span style="left:564.60px;top:1022.91px;line-height:26px;font-size:17px;color:#000;white-space:nowrap;letter-spacing:0.106px;">Terminal</span>
<svg style="left:661px;top:1024px;" width="19" height="20" viewBox="0 0 19 20"><path d="M5 1H14L19 10L14 19H5L0 10Z" fill="#6e6e6e"/><path d="M7 5L14 10L7 15Z" fill="#f2f2f2"/></svg>
<span style="left:687.00px;top:1022.91px;line-height:26px;font-size:17px;color:#000;white-space:nowrap;letter-spacing:-0.873px;">Services</span>
<svg style="left:775px;top:1024px;" width="20" height="19" viewBox="0 0 20 19"><path d="M0 8.5L7.5 1H13.3L8.9 5.4L15 10.2L18.8 17.7L19.2 21L11.1 13.2L6.4 8L3.3 11.8Z" fill="#6e6e6e"/></svg>
<span style="left:801.00px;top:1022.91px;line-height:26px;font-size:17px;color:#000;white-space:nowrap;letter-spacing:-0.085px;">Build</span>
<svg style="left:9px;top:1055px;" width="20" height="20" viewBox="0 0 20 20"><path d="M3 5V18H16" fill="none" stroke="#6e6e6e" stroke-width="1.3"/><rect x="6.5" y="1.5" width="11" height="13" fill="none" stroke="#6e6e6e" stroke-width="1.3"/></svg>
<span style="left:41.10px;top:1051.09px;line-height:26px;font-size:18.5px;color:#000;white-space:nowrap;letter-spacing:0.519px;">Select and build artifacts configured in the project</span>
<span style="left:1589.70px;top:1051.09px;line-height:26px;font-size:18.5px;color:#000;white-space:nowrap;letter-spacing:-0.225px;">8:16</span>
<span style="left:1644.60px;top:1051.09px;line-height:26px;font-size:18.5px;color:#000;white-space:nowrap;letter-spacing:-2.328px;">CRLF</span>
<span style="left:1707.00px;top:1051.09px;line-height:26px;font-size:18.5px;color:#000;white-space:nowrap;letter-spacing:-0.589px;">UTF-8</span>
<span style="left:1780.00px;top:1051.09px;line-height:26px;font-size:18.5px;color:#000;white-space:nowrap;letter-spacing:-0.857px;">4 spaces</span>
<svg style="left:1870px;top:1056px;" width="14" height="16" viewBox="0 0 14 16"><rect x="0" y="6" width="14" height="10" fill="#5e5e5e"/><path d="M3 6V4A4 4 0 0 1 11 4" fill="none" stroke="#5e5e5e" stroke-width="1.8"/></svg>
<span style="left:1716px;top:1048.0px;line-height:26px;font-size:18.5px;color:rgba(150,150,150,0.75);white-space:nowrap">CSDN @小丫头爱学习</span>
<div style="left:0px;top:1078px;width:1920px;height:2px;background:#1e1e1e;"></div>
<div style="left:472px;top:42px;width:401px;height:203px;background:#f2f2f2;border:1px solid #cdcdcd;border-top:none"></div>
<svg style="left:478px;top:48px;" width="24" height="23" viewBox="0 0 24 23"><path d="M0 8.5L7.5 1H13.3L8.9 5.4L15 10.2L22.8 17.7L19.2 21L11.1 13.2L6.4 8L3.3 11.8Z" fill="#59a869"/></svg>
<span style="left:510.60px;top:46.24px;line-height:26px;font-size:19.5px;color:#000;white-space:nowrap;letter-spacing:-0.133px;">Build <u>P</u>roject</span>
<span style="left:792.40px;top:46.24px;line-height:26px;font-size:19.5px;color:#8c8c8c;white-space:nowrap;letter-spacing:-0.158px;">Ctrl+F9</span>
<span style="left:510.60px;top:77.64px;line-height:26px;font-size:19.5px;color:#000;white-space:nowrap;letter-spacing:0.305px;">Build <u>M</u>odule 'dateUtil'</span>
<span style="left:510.60px;top:109.04px;line-height:26px;font-size:19.5px;color:#000;white-space:nowrap;letter-spacing:-0.247px;">R<u>e</u>compile 'Test.java'</span>
<span style="left:739.20px;top:109.04px;line-height:26px;font-size:19.5px;color:#8c8c8c;white-space:nowrap;letter-spacing:0.162px;">Ctrl+Shift+F9</span>
<div style="left:473px;top:140px;width:400px;height:1px;background:#d9d9d9;"></div>
<span style="left:510.60px;top:144.74px;line-height:26px;font-size:19.5px;color:#000;white-space:nowrap;letter-spacing:-0.086px;"><u>R</u>ebuild Project</span>
<div style="left:473px;top:178px;width:401px;height:31px;background:#2675bf;"></div>
<span style="left:510.60px;top:180.24px;line-height:26px;font-size:19.5px;color:#fff;white-space:nowrap;letter-spacing:-0.139px;">Build Artifacts...</span>
<span style="left:510.60px;top:216.94px;line-height:26px;font-size:19.5px;color:#8c8c8c;white-space:nowrap;letter-spacing:0.100px;">Run Ant Target</span>
<span style="left:729.70px;top:216.94px;line-height:26px;font-size:19.5px;color:#8c8c8c;white-space:nowrap;letter-spacing:0.040px;">Ctrl+Shift+F10</span>
<div style="left:473px;top:170px;width:384px;height:27px;border:7px solid #fc3535"></div>
<svg style="left:876px;top:173px;" width="31" height="31" viewBox="0 0 31 31"><circle cx="15.5" cy="15.5" r="15" fill="#fc3535"/><text x="15.5" y="22" text-anchor="middle" font-family="Liberation Sans" font-size="19" fill="#fff">1</text></svg>
<div style="left:921px;top:164px;width:505px;height:50px;background:#666666;border-radius:5px"></div>
<svg style="left:912px;top:180px;" width="10" height="17" viewBox="0 0 10 17"><path d="M10 0L1 8.5L10 17Z" fill="#666"/></svg>
<span style="left:929.5px;top:175.0px;line-height:30px;font-size:24.6px;color:#fff;white-space:nowrap">编译/构建项目 这样就能编译生成需要的jar类</span>
</body></html>
